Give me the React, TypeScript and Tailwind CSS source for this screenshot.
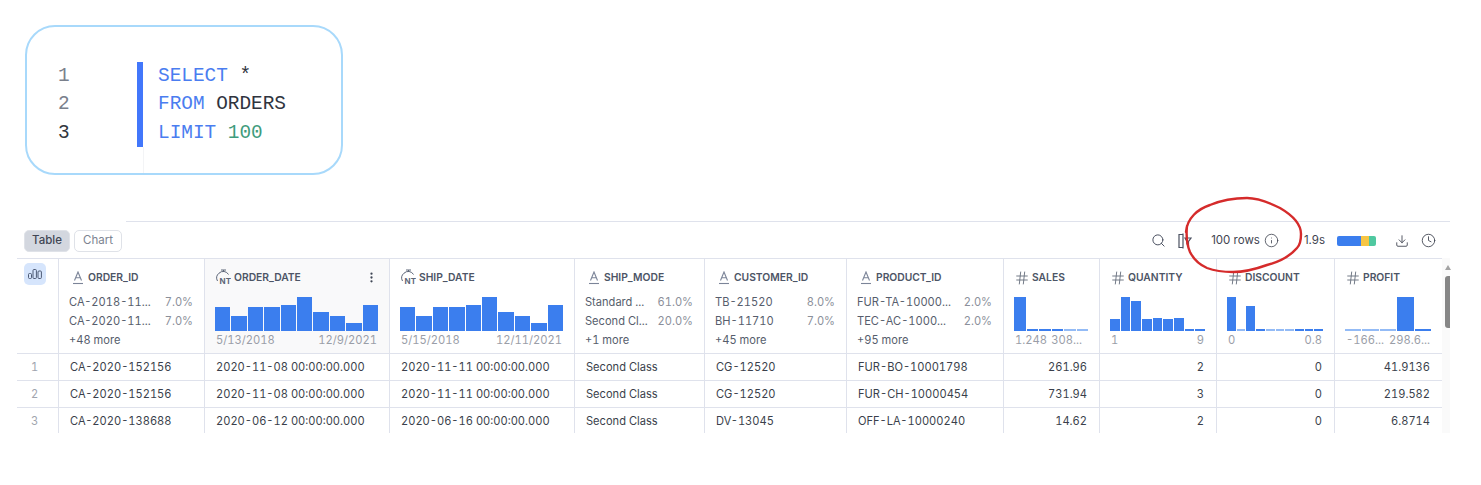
import React from "react";
import { Search, Info, Download, Clock, Hash, MoreVertical } from "lucide-react";

const GRID = "grid grid-cols-[41px_146px_185px_185px_130px_142px_157px_96px_117px_118px_108px]";

type Stat = { kind: "text"; rows: [string, string][]; more: string };
type Hist = { kind: "hist"; bars: number[]; from: string; to: string; tight?: boolean };
type Col = { name: string; type: "text" | "date" | "num"; stat: Stat | Hist; hover?: boolean };

const cols: Col[] = [
  { name: "ORDER_ID", type: "text", stat: { kind: "text", rows: [["CA-2018-11...", "7.0%"], ["CA-2020-11...", "7.0%"]], more: "+48 more" } },
  { name: "ORDER_DATE", type: "date", hover: true, stat: { kind: "hist", bars: [24, 15, 24, 24, 26, 34, 19, 15, 8, 26], from: "5/13/2018", to: "12/9/2021" } },
  { name: "SHIP_DATE", type: "date", stat: { kind: "hist", bars: [24, 15, 24, 24, 26, 34, 19, 15, 8, 26], from: "5/15/2018", to: "12/11/2021" } },
  { name: "SHIP_MODE", type: "text", stat: { kind: "text", rows: [["Standard ...", "61.0%"], ["Second Cl...", "20.0%"]], more: "+1 more" } },
  { name: "CUSTOMER_ID", type: "text", stat: { kind: "text", rows: [["TB-21520", "8.0%"], ["BH-11710", "7.0%"]], more: "+45 more" } },
  { name: "PRODUCT_ID", type: "text", stat: { kind: "text", rows: [["FUR-TA-10000...", "2.0%"], ["TEC-AC-1000...", "2.0%"]], more: "+95 more" } },
  { name: "SALES", type: "num", stat: { kind: "hist", bars: [34, 2, 2, 2, 1, 1], from: "1.248", to: "308...", tight: true } },
  { name: "QUANTITY", type: "num", stat: { kind: "hist", bars: [12, 34, 30, 12, 13, 12, 13, 2, 2], from: "1", to: "9" } },
  { name: "DISCOUNT", type: "num", stat: { kind: "hist", bars: [34, 1, 25, 2, 1, 1, 1, 2, 2, 2], from: "0", to: "0.8" } },
  { name: "PROFIT", type: "num", stat: { kind: "hist", bars: [1, 1, 1, 34, 2], from: "-166...", to: "298.6..." } },
];

const rows = [
  ["1", "CA-2020-152156", "2020-11-08 00:00:00.000", "2020-11-11 00:00:00.000", "Second Class", "CG-12520", "FUR-BO-10001798", "261.96", "2", "0", "41.9136"],
  ["2", "CA-2020-152156", "2020-11-08 00:00:00.000", "2020-11-11 00:00:00.000", "Second Class", "CG-12520", "FUR-CH-10000454", "731.94", "3", "0", "219.582"],
  ["3", "CA-2020-138688", "2020-06-12 00:00:00.000", "2020-06-16 00:00:00.000", "Second Class", "DV-13045", "OFF-LA-10000240", "14.62", "2", "0", "6.8714"],
];

function TypeIcon({ type }: { type: Col["type"] }) {
  if (type === "num") return <Hash size={16} strokeWidth={1.4} className="text-[#6b7280] shrink-0 mr-[2px]" />;
  if (type === "text")
    return (
      <svg width="12" height="14" viewBox="0 0 12 14" fill="none" stroke="#7b8498" strokeWidth="1.1" className="shrink-0 ml-[3px] mr-[4px]">
        <path d="M2.5 9.5 6 1l3.5 8.5M3.7 6.8h4.6" />
        <path d="M1 12.5h10" />
      </svg>
    );
  return (
    <svg width="15" height="17" viewBox="0 0 15 17" fill="none" stroke="#5d6678" strokeWidth="1" className="shrink-0 ml-[1px] mr-[3px]">
      <path d="M5 1h5M7.5 1v2" />
      <path d="M12.5 5.5A6 6 0 0 0 3 4.2 6.3 6.3 0 0 0 1.5 12" />
      <text x="3.6" y="15" fontSize="8" fontWeight="700" fill="#5d6678" stroke="none" fontFamily="Inter, sans-serif">NT</text>
    </svg>
  );
}

function HistBars({ bars }: { bars: number[] }) {
  return (
    <div className="flex items-end h-[35px] gap-[1px]">
      {bars.map((h, i) => (
        <div
          key={i}
          className={h < 2 ? "flex-1 bg-[#93bbf6]" : "flex-1 bg-[#3b7eee]"}
          style={{ height: h < 2 ? 2 : h }}
        />
      ))}
    </div>
  );
}

function HeaderCell({ col }: { col: Col }) {
  const s = col.stat;
  return (
    <div className={`border-l border-[#dfe2ec] pl-[10px] pr-[11px] pt-[10px] min-w-0 ${col.hover ? "bg-[#f9f9fa]" : ""}`}>
      <div className="flex items-center h-[17px] text-[10.3px] font-semibold text-[#4d5566] whitespace-nowrap">
        <TypeIcon type={col.type} />
        <span>{col.name}</span>
        {col.hover && <MoreVertical size={13} strokeWidth={2.2} className="ml-auto text-[#3f4654]" />}
      </div>
      {s.kind === "text" ? (
        <div className="mt-[7px] text-[11.1px] leading-[19px] tabular-nums text-[#565d6c]">
          {s.rows.map(([l, p]) => (
            <div key={l} className="flex justify-between whitespace-nowrap">
              <span>{l}</span>
              <span className="text-[#8b8f9a]">{p}</span>
            </div>
          ))}
          <div>{s.more}</div>
        </div>
      ) : (
        <div className="mt-[10px]">
          <HistBars bars={s.bars} />
          <div className={`flex justify-between pl-[1px] text-[11.2px] leading-[19px] tabular-nums text-[#9a9ea8] whitespace-nowrap ${s.tight ? "pr-[6px]" : "pr-[1px]"}`}>
            <span>{s.from}</span>
            <span>{s.to}</span>
          </div>
        </div>
      )}
    </div>
  );
}

function Row({ cells }: { cells: string[] }) {
  return (
    <div className={`${GRID} h-[27px] border-b border-[#dfe2ec] items-stretch text-[11.1px] tabular-nums`}>
      {cells.map((c, i) => {
        const right = i >= 7;
        return (
          <div
            key={i}
            className={
              i === 0
                ? "pl-[14px] flex items-center text-[#a0a4ae]"
                : right
                  ? "border-l border-[#dfe2ec] pr-[12px] flex items-center justify-end text-[#3a3f4b] whitespace-nowrap"
                  : "border-l border-[#dfe2ec] pl-[11px] flex items-center text-[#3a3f4b] whitespace-nowrap"
            }
          >
            {c}
          </div>
        );
      })}
    </div>
  );
}

function Toolbar() {
  return (
    <div className="flex items-center h-[36px] pt-[1px] pl-[7px] pr-[6px] text-[11.5px] text-[#3f4450]">
      <div className="flex items-center gap-[4px]">
        <button className="h-[22px] w-[46px] rounded-[5px] bg-[#d3d7df] text-[#3f4654] font-medium border border-[#dfe2e8]">Table</button>
        <button className="h-[22px] w-[48px] rounded-[5px] bg-white text-[#7c8391] border border-[#dfe2e8]">Chart</button>
      </div>
      <div className="ml-auto flex items-center">
        <Search size={15} strokeWidth={1.6} className="text-[#4b5161]" />
        <svg width="14" height="16" viewBox="0 0 14 16" fill="none" stroke="#4b5161" strokeWidth="1.2" className="ml-[12px]">
          <path d="M5 1.5H1v13h4" />
          <path d="M5 0.5v15" />
          <path d="M7 5h6L10.5 8.5V12L9 11V8.5Z" />
        </svg>
        <span className="ml-[19px]">100 rows</span>
        <Info size={15} strokeWidth={1.3} className="ml-[4px] text-[#3f4450]" />
        <span className="ml-[25px]">1.9s</span>
        <div className="ml-[12px] flex h-[10px] w-[39px] rounded-[2px] overflow-hidden">
          <div className="w-[24px] bg-[#3b7eee]" />
          <div className="w-[8px] bg-[#f7c543]" />
          <div className="w-[7px] bg-[#4fc8a0]" />
        </div>
        <Download size={14} strokeWidth={1.5} className="ml-[19px] text-[#3f4450]" />
        <Clock size={15} strokeWidth={1.4} className="ml-[12px] text-[#3f4450]" />
      </div>
    </div>
  );
}

export default function App() {
  return (
    <div className="relative w-[1481px] h-[485px] bg-white overflow-hidden font-['Inter',sans-serif]">
      <div className="pt-[25px] pl-[25px]">
        <div className="w-[318px] h-[150px] rounded-[30px] border-2 border-[#a8d9fb] flex pt-[35px] font-['Liberation_Mono',monospace] text-[19.4px] leading-[28.4px]">
          <div className="w-[110px] h-[85px] pl-[31px] text-[#7a808c]">
            <div>1</div>
            <div>2</div>
            <div className="text-[#33373f]">3</div>
          </div>
          <div className="w-[6px]">
            <div className="h-[85px] bg-[#4277fb]" />
            <div className="ml-[6px] w-px h-[26px] bg-[#f3f4f6]" />
          </div>
          <div className="pl-[15px] text-[#2f343e] whitespace-pre">
            <div><span className="text-[#4a7df0]">SELECT</span> *</div>
            <div><span className="text-[#4a7df0]">FROM</span> ORDERS</div>
            <div><span className="text-[#4a7df0]">LIMIT</span> <span className="text-[#3f9c7d]">100</span></div>
          </div>
        </div>
      </div>

      <div className="mt-[46px] ml-[126px] w-[1324px] h-px bg-[#dfe2ec]" />

      <div className="ml-[17px] w-[1425px]">
        <Toolbar />
      </div>

      <div className="ml-[17px] flex w-[1433px] h-[175px]">
        <div className="w-[1425px] h-[175px] overflow-hidden border-t border-[#dfe2ec]">
          <div className={`${GRID} h-[95px] border-b border-[#dfe2ec]`}>
            <div className="pl-[7px] pt-[4px]">
              <div className="w-[22px] h-[22px] rounded-[5px] bg-[#d6e5fc] flex items-center justify-center">
                <svg width="14" height="10" viewBox="0 0 14 10" fill="none" stroke="#4d5a75" strokeWidth="1">
                  <rect x="0.5" y="4.5" width="3" height="5" rx="1" />
                  <rect x="5" y="0.5" width="3.4" height="9" rx="1" />
                  <rect x="10" y="2" width="3.4" height="7.5" rx="1" />
                </svg>
              </div>
            </div>
            {cols.map((c) => (
              <HeaderCell key={c.name} col={c} />
            ))}
          </div>
          {rows.map((r) => (
            <Row key={r[0]} cells={r} />
          ))}
        </div>
        <div className="w-[8px] h-[175px] bg-[#fafafa] pt-[6px] pl-[3px] border-t border-[#fafafa]">
          <div className="w-0 h-0 border-l-[3px] border-r-[3px] border-b-[5px] border-l-transparent border-r-transparent border-b-[#a3a3a3]" />
          <div className="mt-[6px] w-[5px] h-[52px] rounded-l-[3px] bg-[#868686]" />
        </div>
      </div>

      <svg className="absolute left-[1180px] top-[190px] pointer-events-none" width="130" height="90" viewBox="1180 190 130 90" fill="none">
        <path
          d="M1186 232C1187 218 1198 209 1210 205C1222 200 1236 198 1247 198C1258 198 1270 203 1280 208C1292 215 1301 224 1301 234C1301 241 1300 245 1297 248C1290 256 1279 262 1267 265C1256 269 1244 272 1233 272C1224 272 1215 271 1207 268C1198 264 1193 258 1190 252C1187 245 1186 236 1187 226"
          stroke="#d52b2b"
          strokeWidth="2.4"
          strokeLinecap="round"
        />
      </svg>
    </div>
  );
}
